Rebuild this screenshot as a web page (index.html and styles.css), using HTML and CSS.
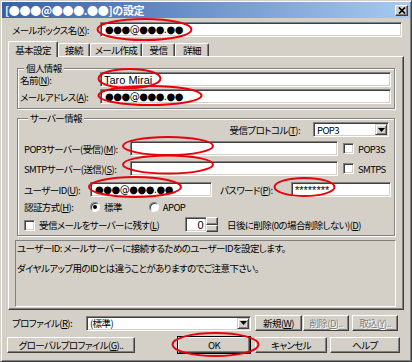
FILE: index.html
```html
<!DOCTYPE html>
<html lang="ja">
<head>
<meta charset="utf-8">
<link rel="stylesheet" href="styles.css">
</head>
<body>
<div class="window">
  <div class="titlebar">
    <span class="title">[●●●@●●●.●●]の設定</span>
    <span class="close"><svg width="8" height="7" viewBox="0 0 8 7"><path d="M1 0.5L7 6.5M7 0.5L1 6.5" stroke="#000" stroke-width="1.7"/></svg></span>
  </div>

  <div class="row mailbox-row">
    <span class="label mailbox-label">メールボックス名(<u>X</u>):</span>
    <span class="field grow dots">●●●@●●●.●●</span>
  </div>

  <div class="tabs">
    <span class="tab active tab-basic">基本設定</span>
    <span class="tab tab-conn">接続</span>
    <span class="tab tab-compose">メール作成</span>
    <span class="tab tab-recv">受信</span>
    <span class="tab tab-detail">詳細</span>
  </div>

  <div class="panel">
    <fieldset class="group personal">
      <legend>個人情報</legend>
      <div class="row first">
        <span class="label personal-label">名前(<u>N</u>):</span>
        <span class="field grow latin">Taro Mirai</span>
      </div>
      <div class="row gap2">
        <span class="label personal-label">メールアドレス(<u>A</u>):</span>
        <span class="field grow dots">●●●@●●●.●●</span>
      </div>
    </fieldset>

    <fieldset class="group server">
      <legend>サーバー情報</legend>
      <div class="row first protocol-row">
        <span class="label">受信プロトコル(<u>T</u>):</span>
        <span class="field combo protocol">
          <span class="grow">POP3</span>
          <span class="drop"><svg width="7" height="4" viewBox="0 0 7 4"><path d="M0 0h7L3.5 4z" fill="#000"/></svg></span>
        </span>
      </div>
      <div class="row gap4">
        <span class="label server-label">POP3サーバー(受信)(<u>M</u>):</span>
        <span class="field host"></span>
        <span class="check ssl"></span>
        <span class="check-label">POP3S</span>
      </div>
      <div class="row gap5">
        <span class="label server-label">SMTPサーバー(送信)(<u>S</u>):</span>
        <span class="field host"></span>
        <span class="check ssl"></span>
        <span class="check-label">SMTPS</span>
      </div>
      <div class="row gap6">
        <span class="label user-label">ユーザーID(<u>U</u>):</span>
        <span class="field user dots">●●●@●●●.●●</span>
        <span class="label pass-label">パスワード(<u>P</u>):</span>
        <span class="field grow latin pass">********</span>
      </div>
      <div class="row gap4 auth-row">
        <span class="label user-label">認証方式(<u>H</u>):</span>
        <span class="radio on"></span>
        <span class="radio-label std">標準</span>
        <span class="radio"></span>
        <span class="radio-label">APOP</span>
      </div>
      <div class="row gap4">
        <span class="check keep"></span>
        <span class="label keep-label">受信メールをサーバーに残す(<u>L</u>)</span>
        <span class="spin">
          <span class="field spin-value">0</span>
          <span class="spin-btns">
            <span class="spin-btn"></span>
            <span class="spin-btn"></span>
          </span>
        </span>
        <span class="label days-label">日後に削除(0の場合削除しない)(<u>D</u>)</span>
      </div>
    </fieldset>

    <div class="help">
      <p>ユーザーID: メールサーバーに接続するためのユーザーIDを設定します。</p>
      <p>ダイヤルアップ用のIDとは違うことがありますのでご注意下さい。</p>
    </div>
  </div>

  <div class="row profile-row">
    <span class="label profile-label">プロファイル(<u>R</u>):</span>
    <span class="field combo profile">
      <span class="grow">(標準)</span>
      <span class="drop"><svg width="7" height="4" viewBox="0 0 7 4"><path d="M0 0h7L3.5 4z" fill="#000"/></svg></span>
    </span>
    <span class="btn btn-new">新規(<u>W</u>)</span>
    <span class="btn btn-del disabled">削除(<u>D</u>)..</span>
    <span class="btn btn-import disabled">取込(<u>Y</u>)..</span>
  </div>

  <div class="row button-row">
    <span class="btn btn-global">グローバルプロファイル(<u>G</u>)..</span>
    <span class="btn btn-ok default">OK</span>
    <span class="btn btn-cancel">キャンセル</span>
    <span class="btn btn-help">ヘルプ</span>
  </div>

  <svg class="marks" width="412" height="362" viewBox="0 0 412 362">
    <ellipse cx="144.5" cy="29.5" rx="47" ry="10.5"/>
    <ellipse cx="129.5" cy="78.5" rx="31" ry="9.5"/>
    <ellipse cx="150" cy="95.5" rx="51.5" ry="9.5"/>
    <ellipse cx="168" cy="146" rx="45" ry="9"/>
    <ellipse cx="168" cy="164.5" rx="45" ry="9"/>
    <ellipse cx="135" cy="187" rx="46" ry="10"/>
    <ellipse cx="304.5" cy="187" rx="30" ry="9"/>
    <ellipse cx="215.5" cy="344.5" rx="43" ry="11.5"/>
  </svg>
</div>
</body>
</html>
```

FILE: styles.css
```css
* {
    box-sizing: border-box;
}

body {
    margin: 0;
    background: #d4d0c8;
    font-family: "Noto Sans CJK JP", sans-serif;
    font-size: 9.5px;
    line-height: 12px;
    letter-spacing: -0.6px;
    font-feature-settings: "palt";
    color: #000;
}

u {
    text-decoration: underline;
    text-underline-offset: 1px;
}

.window {
    position: relative;
    width: 412px;
    height: 362px;
    padding: 1px;
    background: #d4d0c8;
    border: 1px solid;
    border-color: #d4d0c8 #404040 #404040 #d4d0c8;
    box-shadow: inset 1px 1px #fff, inset -1px -1px #808080;
    display: flex;
    flex-direction: column;
}

/* title bar */
.titlebar {
    height: 16px;
    display: flex;
    align-items: center;
    justify-content: space-between;
    padding: 0 2px 0 3px;
    background: linear-gradient(to right, #3760a8, #a6caf0);
}

.title {
    color: #fff;
    font-weight: bold;
    font-size: 11px;
    letter-spacing: -0.3px;
}

.close {
    width: 13px;
    height: 11px;
    background: #d4d0c8;
    border: 1px solid;
    border-color: #fff #404040 #404040 #fff;
    box-shadow: inset -1px -1px #808080;
    display: flex;
    align-items: center;
    justify-content: center;
}

/* generic rows and controls */
.row {
    display: flex;
    align-items: center;
    height: 15px;
    flex: none;
}

.label {
    white-space: nowrap;
    flex: none;
}

.grow {
    flex: 1;
}

.field {
    height: 15px;
    background: #fff;
    border: 1px solid;
    border-color: #808080 #fff #fff #808080;
    box-shadow: inset 1px 1px #404040, inset -1px -1px #d4d0c8;
    padding: 0 3px;
    display: flex;
    align-items: center;
    white-space: nowrap;
    overflow: hidden;
}

.dots {
    font-family: "DejaVu Sans", sans-serif;
    font-size: 10px;
    letter-spacing: -0.5px;
    padding-left: 4px;
}

.latin {
    font-family: "Liberation Sans", sans-serif;
    font-size: 11px;
    letter-spacing: 0;
}

.combo {
    padding-right: 1px;
}

.drop {
    width: 12px;
    height: 11px;
    background: #d4d0c8;
    border: 1px solid;
    border-color: #d4d0c8 #404040 #404040 #d4d0c8;
    box-shadow: inset 1px 1px #fff, inset -1px -1px #808080;
    display: flex;
    align-items: center;
    justify-content: center;
}

.btn {
    height: 16px;
    background: #d4d0c8;
    border: 1px solid;
    border-color: #fff #404040 #404040 #fff;
    box-shadow: inset -1px -1px #808080;
    display: flex;
    align-items: center;
    justify-content: center;
    white-space: nowrap;
    flex: none;
}

.btn.default {
    outline: 1px solid #000;
}

.btn.disabled {
    color: #808080;
    text-shadow: 1px 1px #fff;
}

.check {
    width: 11px;
    height: 11px;
    flex: none;
    background: #fff;
    border: 1px solid;
    border-color: #808080 #fff #fff #808080;
    box-shadow: inset 1px 1px #404040, inset -1px -1px #d4d0c8;
}

.radio {
    width: 10px;
    height: 10px;
    flex: none;
    border-radius: 50%;
    background: #fff;
    border: 1px solid;
    border-color: #808080 #fff #fff #808080;
    box-shadow: inset 1px 1px #404040;
    display: flex;
    align-items: center;
    justify-content: center;
}

.radio.on::after {
    content: "";
    width: 4px;
    height: 4px;
    border-radius: 50%;
    background: #000;
}

/* mailbox name */
.mailbox-row {
    margin-top: 4px;
    padding: 0 8px 0 10px;
}

.mailbox-label {
    width: 88px;
}

/* tabs */
.tabs {
    margin-top: 4px;
    height: 15px;
    padding-left: 6px;
    display: flex;
    align-items: flex-end;
    flex: none;
}

.tab {
    height: 13px;
    display: flex;
    align-items: center;
    justify-content: center;
    border: 1px solid;
    border-bottom: none;
    border-color: #fff #404040 #fff #fff;
    box-shadow: inset -1px 0 #808080;
    border-radius: 2px 2px 0 0;
    background: #d4d0c8;
}

.tab.active {
    height: 16px;
    margin-bottom: -1px;
    position: relative;
    z-index: 1;
}

.tab-basic { width: 50px; }
.tab-conn { width: 32px; }
.tab-compose { width: 52px; }
.tab-recv { width: 33px; }
.tab-detail { width: 34px; }

/* panel */
.panel {
    margin: 0 6px;
    height: 254px;
    flex: none;
    border: 1px solid;
    border-color: #fff #404040 #404040 #fff;
    box-shadow: inset -1px -1px #808080;
    padding: 0 8px;
}

.group {
    margin: 0;
    min-width: 0;
    border: 1px solid #808080;
    box-shadow: inset 1px 1px #fff, 1px 1px #fff;
}

.group legend {
    padding: 0 2px;
    margin-left: 4px;
    line-height: 10px;
    background: #d4d0c8;
}

.row.first {
    margin-top: -1px;
}

.gap2 { margin-top: 2px; }
.gap4 { margin-top: 4px; }
.gap5 { margin-top: 5px; }
.gap6 { margin-top: 6px; }

.personal {
    margin-top: 6px;
    padding: 0 3px 4px 2px;
}

.personal-label {
    width: 80px;
}

.server {
    margin-top: 4px;
    padding: 0 3px 3px 6px;
}

.protocol-row {
    justify-content: flex-end;
}

.protocol {
    width: 76px;
    margin: 0 2px 0 13px;
}

.server-label {
    width: 106px;
}

.host {
    width: 208px;
}

.ssl {
    margin-left: 5px;
}

.check-label {
    margin-left: 4px;
}

.user-label {
    width: 66px;
}

.user {
    width: 122px;
}

.pass-label {
    width: 71px;
    margin-left: 8px;
}

.auth-row {
    height: 12px;
}

.radio-label {
    margin-left: 4px;
}

.radio-label.std {
    margin-right: 27px;
}

.keep {
    margin-top: 1px;
}

.keep-label {
    width: 146px;
    margin-left: 4px;
}

.spin {
    display: flex;
    height: 15px;
}

.spin-value {
    width: 21px;
    justify-content: flex-end;
    border-right: none;
    font-family: "Liberation Sans", sans-serif;
    font-size: 11px;
}

.spin-btns {
    display: flex;
    flex-direction: column;
    width: 12px;
}

.spin-btn {
    flex: 1;
    background: #d4d0c8;
    border: 1px solid;
    border-color: #fff #404040 #404040 #fff;
    box-shadow: inset -1px -1px #808080;
}

.days-label {
    margin-left: 9px;
}

.help {
    margin: 4px -1px 0 -2px;
    height: 67px;
    border: 1px solid;
    border-color: #808080 #fff #fff #808080;
    padding: 1px 1px;
}

.help p {
    margin: 0 0 8px;
    white-space: nowrap;
}

/* bottom area */
.profile-row {
    margin-top: 5px;
    height: 16px;
    padding-left: 10px;
}

.profile-label {
    width: 74px;
}

.profile {
    width: 165px;
}

.btn-new {
    width: 47px;
    margin-left: 4px;
}

.btn-del {
    width: 46px;
    margin-left: 1px;
}

.btn-import {
    width: 46px;
    margin-left: 3px;
}

.button-row {
    margin-top: 6px;
    height: 16px;
    padding-left: 5px;
}

.btn-global {
    width: 128px;
}

.btn-ok {
    width: 72px;
    margin-left: 43px;
}

.btn-cancel {
    width: 72px;
    margin-left: 5px;
}

.btn-help {
    width: 70px;
    margin-left: 3px;
}

/* red marks drawn over the dialog */
.marks {
    position: absolute;
    left: -1px;
    top: -1px;
    pointer-events: none;
}

.marks ellipse {
    fill: none;
    stroke: #e8000b;
    stroke-width: 2;
}
```
